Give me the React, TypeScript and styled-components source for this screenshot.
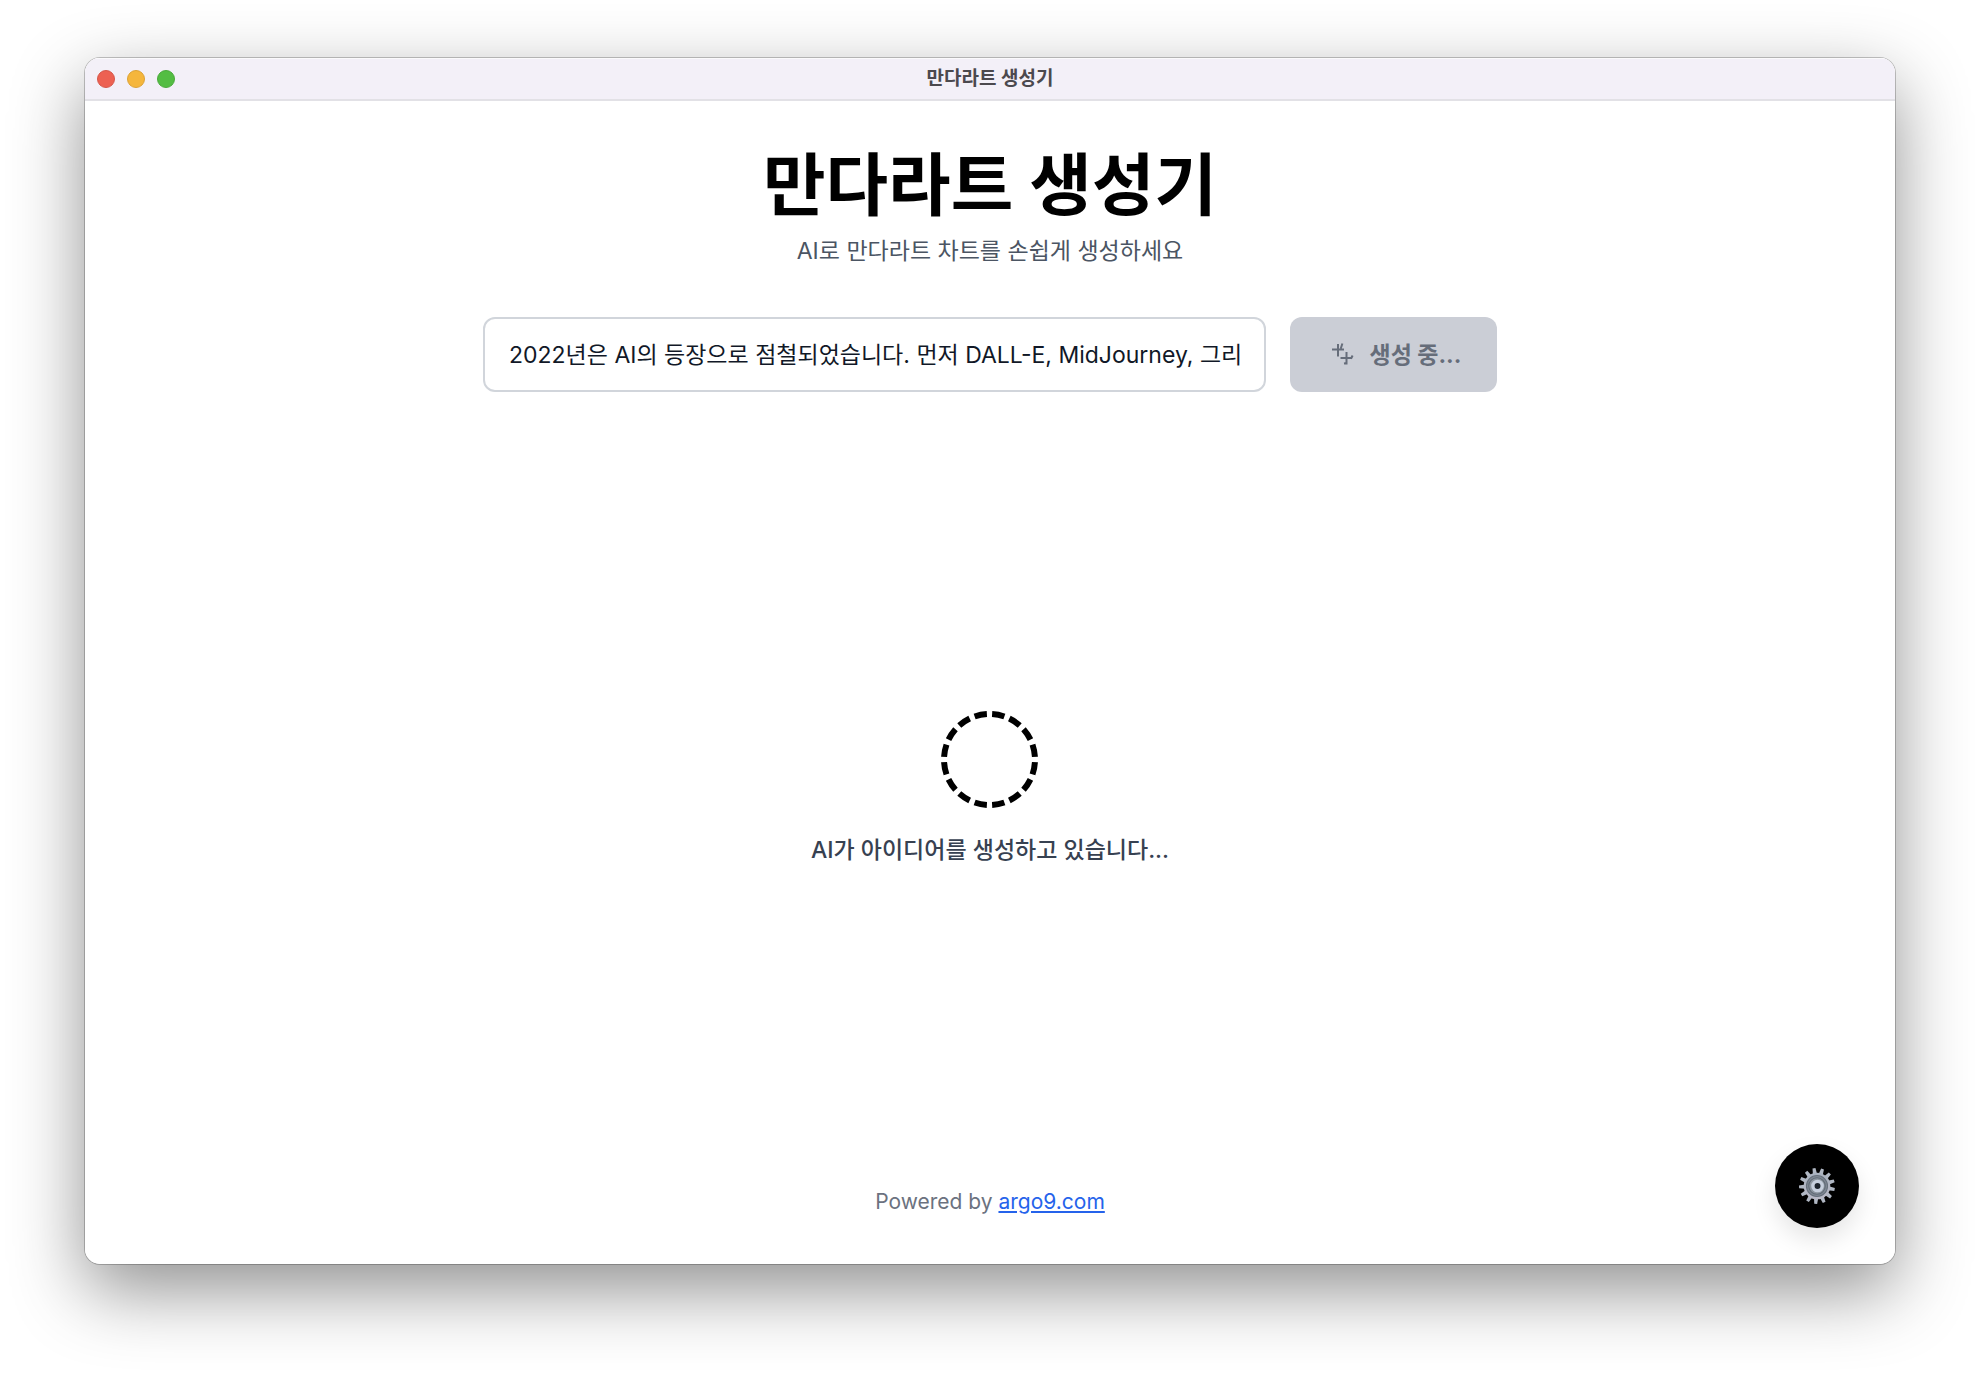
import React, { useId } from "react";
import styled, { createGlobalStyle } from "styled-components";

const GlobalStyle = createGlobalStyle`
  * { box-sizing: border-box; }
  body {
    margin: 0;
    background: #fff;
    font-family: Inter, "Noto Sans CJK KR", sans-serif;
    color: #111827;
  }
  button, input { font: inherit; }
`;

const Desktop = styled.div`
  display: flex;
  min-height: 100vh;
  padding: 58px 85px 112px;
`;

const Window = styled.div`
  position: relative;
  flex: 1;
  display: flex;
  flex-direction: column;
  overflow: hidden;
  border-radius: 15px;
  background: #fff;
`;

const Shadow = styled.div`
  flex: 1;
  display: flex;
  border-radius: 15px;
  box-shadow: 0 0 0 1px rgba(0, 0, 0, 0.22), 0 26px 72px rgba(0, 0, 0, 0.44);
`;

const TitleBar = styled.header`
  display: grid;
  grid-template-columns: 1fr auto 1fr;
  align-items: center;
  height: 43px;
  padding: 0 12px;
  background: #f3f0f8;
  border-bottom: 2px solid #e2e1e6;
  box-shadow: inset 0 1px 0 #fbfafc;
`;

const Lights = styled.div`
  display: flex;
  gap: 12px;
`;

const Light = styled.button<{ $color: string; $edge: string }>`
  width: 18px;
  height: 18px;
  padding: 0;
  border: 1px solid ${(p) => p.$edge};
  border-radius: 50%;
  background: ${(p) => p.$color};
`;

const WindowTitle = styled.span`
  font-size: 19px;
  line-height: 24px;
  font-weight: 700;
  color: #4b494e;
`;

const Page = styled.main`
  flex: 1;
  display: flex;
  flex-direction: column;
  align-items: center;
  padding: 40px 36px;
`;

const Heading = styled.h1`
  margin: 0;
  font-size: 68px;
  line-height: 88px;
  font-weight: 700;
  color: #000;
`;

const Subtitle = styled.p`
  margin: 4px 0 48px;
  font-size: 23px;
  line-height: 36px;
  color: #4b5563;
`;

const Form = styled.form`
  display: flex;
  gap: 24px;
  width: 100%;
  max-width: 1014px;
`;

const Idea = styled.input`
  flex: 1;
  min-width: 0;
  height: 75px;
  padding: 0 24px 3px;
  border: 2px solid #d1d5db;
  border-radius: 12px;
  background: #fff;
  font-size: 23px;
  color: #111827;
`;

const Generate = styled.button`
  display: flex;
  align-items: center;
  justify-content: center;
  gap: 16px;
  width: 207px;
  height: 75px;
  padding: 0 0 3px 4px;
  border: 0;
  border-radius: 12px;
  background: #cbced6;
  font-size: 23px;
  font-weight: 700;
  color: #666d7a;
`;

const Status = styled.section`
  flex: 1;
  display: flex;
  flex-direction: column;
  align-items: center;
  justify-content: center;
  gap: 24px;
  padding-top: 6px;
`;

const StatusText = styled.p`
  margin: 0;
  font-size: 23px;
  line-height: 36px;
  font-weight: 500;
  color: #374151;
`;

const Footer = styled.footer`
  font-size: 21px;
  line-height: 44px;
  color: #6b7280;
`;

const FooterLink = styled.a`
  color: #2563eb;
  text-decoration: underline;
`;

const Settings = styled.button`
  position: absolute;
  right: 36px;
  bottom: 36px;
  display: grid;
  place-items: center;
  width: 84px;
  height: 84px;
  padding: 0;
  border: 0;
  border-radius: 50%;
  background: #000;
  box-shadow: 0 12px 24px rgba(0, 0, 0, 0.1);
`;

const Sparkle = () => (
  <svg width="24" height="24" viewBox="0 0 24 24" fill="none" stroke="currentColor" strokeWidth="2" aria-hidden="true">
    <path d="M2 8.5h12M8 3v12.5M12.4 2.5l-1.6 5M10.5 17H22M16.5 11v12.5M22.6 14.5L21 17.8M14 22.4l3-.4" />
  </svg>
);

const Spinner = () => (
  <svg width="97" height="97" viewBox="0 0 97 97" fill="none" aria-hidden="true">
    <circle cx="48.5" cy="48.5" r="45.5" pathLength="256" stroke="#000" strokeWidth="6" strokeDasharray="11.2 4.8" strokeDashoffset="-2.4" />
  </svg>
);

const Gear = () => {
  const id = useId();
  const teeth = Array.from({ length: 13 }, (_, i) => i * (360 / 13) + 18);
  return (
    <svg width="38" height="38" viewBox="0 0 36 36" aria-hidden="true">
      <defs>
        <linearGradient id={id} x1="0" y1="0" x2="0" y2="1">
          <stop offset="0" stopColor="#a9b2bf" />
          <stop offset="1" stopColor="#b9b9c6" />
        </linearGradient>
      </defs>
      {teeth.map((a) => (
        <path key={a} d="M16 7L16.6 1h2.8l.6 6z" fill="#b0b7c3" transform={`rotate(${a} 18 18)`} />
      ))}
      <circle cx="18" cy="18" r="12.6" fill={`url(#${id})`} />
      <circle cx="18" cy="18" r="10" fill="#7f8893" stroke="#66707c" strokeWidth="1" />
      <circle cx="18" cy="18" r="7.8" fill="#8c959f" stroke="#606a76" strokeWidth="1" />
      <circle cx="18.5" cy="18" r="4.4" fill="#1d242d" stroke="#c6cfdd" strokeWidth="3.2" />
    </svg>
  );
};

export default function App() {
  return (
    <>
      <GlobalStyle />
      <Desktop>
        <Shadow>
          <Window>
            <TitleBar>
              <Lights>
                <Light type="button" aria-label="닫기" $color="#ed6152" $edge="#d5574a" />
                <Light type="button" aria-label="최소화" $color="#f5b63c" $edge="#dba236" />
                <Light type="button" aria-label="확대" $color="#53bd43" $edge="#4aa93c" />
              </Lights>
              <WindowTitle>만다라트 생성기</WindowTitle>
            </TitleBar>
            <Page>
              <Heading>만다라트 생성기</Heading>
              <Subtitle>AI로 만다라트 차트를 손쉽게 생성하세요</Subtitle>
              <Form onSubmit={(e) => e.preventDefault()}>
                <Idea
                  type="text"
                  aria-label="아이디어"
                  defaultValue="2022년은 AI의 등장으로 점철되었습니다. 먼저 DALL-E, MidJourney, 그리고"
                />
                <Generate type="submit" disabled>
                  <Sparkle />
                  생성 중...
                </Generate>
              </Form>
              <Status role="status">
                <Spinner />
                <StatusText>AI가 아이디어를 생성하고 있습니다...</StatusText>
              </Status>
              <Footer>
                Powered by <FooterLink href="https://argo9.com">argo9.com</FooterLink>
              </Footer>
            </Page>
            <Settings type="button" aria-label="설정">
              <Gear />
            </Settings>
          </Window>
        </Shadow>
      </Desktop>
    </>
  );
}
